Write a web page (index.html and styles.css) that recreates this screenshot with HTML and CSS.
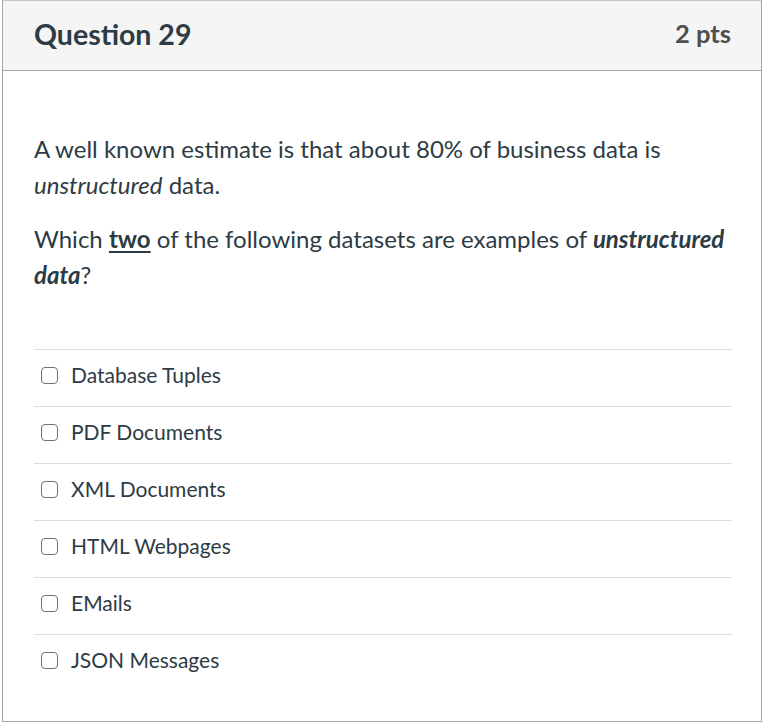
FILE: index.html
```html
<!DOCTYPE html>
<html>
<head>
<meta charset="utf-8">
<link rel="stylesheet" href="styles.css">
</head>
<body>
<div class="question">
  <div class="header">
    <span class="title">Question 29</span>
    <span class="pts">2 pts</span>
  </div>
  <div class="content">
    <p>A well known estimate is that about 80% of business data is <em>unstructured</em> data.</p>
    <p>Which <strong class="u">two</strong> of the following datasets are examples of <strong><em>unstructured data</em></strong>?</p>
    <div class="answers">
      <label class="answer"><span class="box"></span><span class="label">Database Tuples</span></label>
      <label class="answer"><span class="box"></span><span class="label">PDF Documents</span></label>
      <label class="answer"><span class="box"></span><span class="label">XML Documents</span></label>
      <label class="answer"><span class="box"></span><span class="label">HTML Webpages</span></label>
      <label class="answer"><span class="box"></span><span class="label">EMails</span></label>
      <label class="answer"><span class="box"></span><span class="label">JSON Messages</span></label>
    </div>
  </div>
</div>
</body>
</html>
```

FILE: styles.css
```css
* { box-sizing: border-box; }
html, body { margin: 0; padding: 0; background: #fff; }
body {
  font-family: Lato, "Liberation Sans", sans-serif;
  color: #2d3b45;
  padding: 0 7px 0 2px;
}
.question {
  width: 760px;
  height: 722px;
  border: 1px solid #a5a5a5;
  border-top-color: #c4c4c4;
}
.header {
  height: 70px;
  background: #f5f5f5;
  border-bottom: 1px solid #a5a5a5;
  display: flex;
  align-items: center;
  justify-content: space-between;
  padding: 0 30px 4px 31px;
}
.title {
  font-size: 28.5px;
  font-weight: 700;
  color: #2d3b45;
}
.pts {
  font-size: 25.5px;
  font-weight: 700;
  color: #4f4f4f;
  margin-bottom: 1px;
}
.content {
  padding: 60px 29px 0 31px;
}
.content p {
  margin: 0 0 18px;
  font-size: 24px;
  line-height: 36px;
}
.u { text-decoration: underline; text-underline-offset: 3px; }
.answers {
  margin-top: 56px;
}
.answer {
  display: flex;
  align-items: center;
  height: 57px;
  border-top: 1px solid #dcdcdc;
  padding: 0 0 7px 7px;
  font-size: 21px;
}
.box {
  width: 17px;
  height: 17px;
  border: 1.5px solid #727272;
  border-radius: 4px;
  margin: 2px 13px 0 0;
  flex: none;
}
```
